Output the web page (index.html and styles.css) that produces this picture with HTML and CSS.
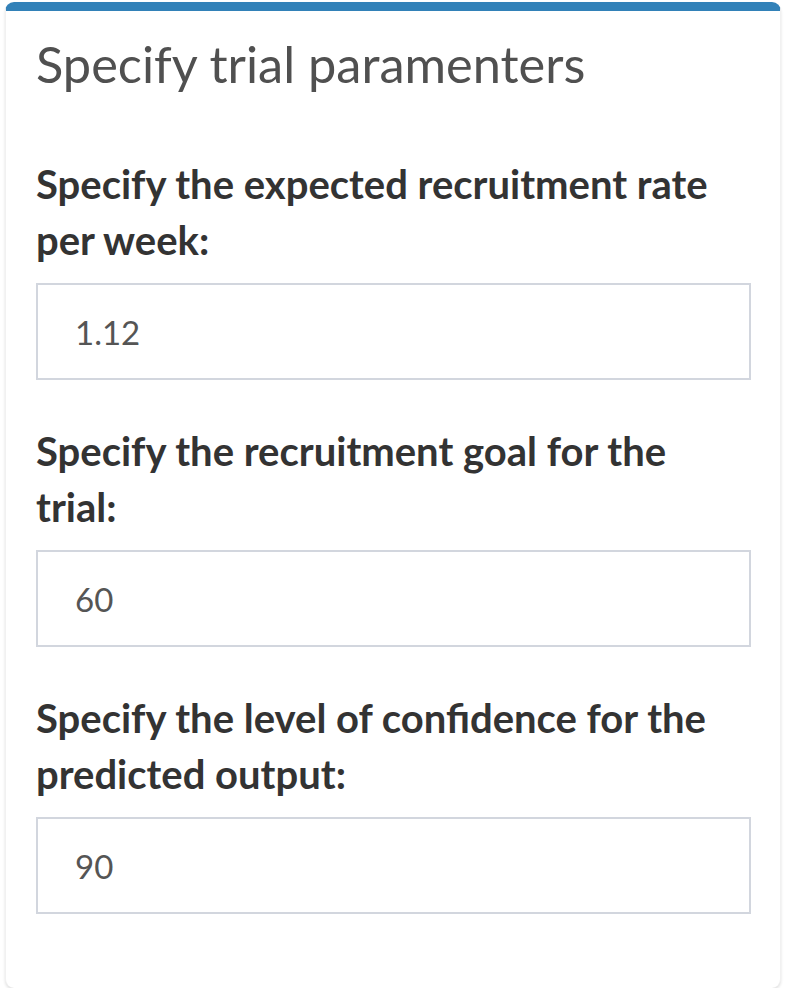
FILE: index.html
```html
<!DOCTYPE html>
<html>
<head>
<meta charset="utf-8">
<link rel="stylesheet" href="styles.css">
</head>
<body>
<div class="box">
  <div class="box-header">
    <h3 class="box-title">Specify trial paramenters</h3>
  </div>
  <div class="box-body">
    <div class="form-group">
      <label class="control-label">Specify the expected recruitment rate per week:</label>
      <input class="form-control" type="number" value="1.12">
    </div>
    <div class="form-group">
      <label class="control-label">Specify the recruitment goal for the trial:</label>
      <input class="form-control" type="number" value="60">
    </div>
    <div class="form-group">
      <label class="control-label">Specify the level of confidence for the predicted output:</label>
      <input class="form-control" type="number" value="90">
    </div>
  </div>
</div>
</body>
</html>
```
FILE: styles.css
```css
html, body {
  margin: 0;
  padding: 0;
  background: #ffffff;
}

body {
  font-family: Lato, "Noto Sans", sans-serif;
  color: #333333;
}

.box {
  box-sizing: border-box;
  margin: 2px 0 0 5px;
  width: 776px;
  height: 986px;
  background: #ffffff;
  border-top: 9px solid #3281b8;
  border-left: 1px solid #f1f1f1;
  border-right: 1px solid #f1f1f1;
  border-radius: 9px;
  box-shadow: 0 2px 3px rgba(0, 0, 0, 0.12);
}

.box-header {
  padding: 23px 0 0 30px;
  height: 145px;
  box-sizing: border-box;
}

.box-title {
  margin: 0;
  font-size: 50.5px;
  line-height: 60px;
  font-weight: 400;
  color: #505050;
}

.box-body {
  padding: 0 29px 0 30px;
}

.form-group {
  display: flex;
  flex-direction: column;
  margin-bottom: 43px;
}

.control-label {
  display: block;
  font-size: 40px;
  line-height: 56px;
  font-weight: 700;
  color: #333333;
  margin: 0 0 15px 0;
}

.form-control {
  box-sizing: border-box;
  width: 715px;
  height: 97px;
  border: 2px solid #d2d6de;
  border-radius: 0;
  padding: 0 0 0 37px;
  font-family: Lato, "Noto Sans", sans-serif;
  font-size: 33px;
  color: #555555;
  background: #ffffff;
  outline: none;
  -moz-appearance: textfield;
}

.form-control::-webkit-outer-spin-button,
.form-control::-webkit-inner-spin-button {
  -webkit-appearance: none;
  margin: 0;
}
```
